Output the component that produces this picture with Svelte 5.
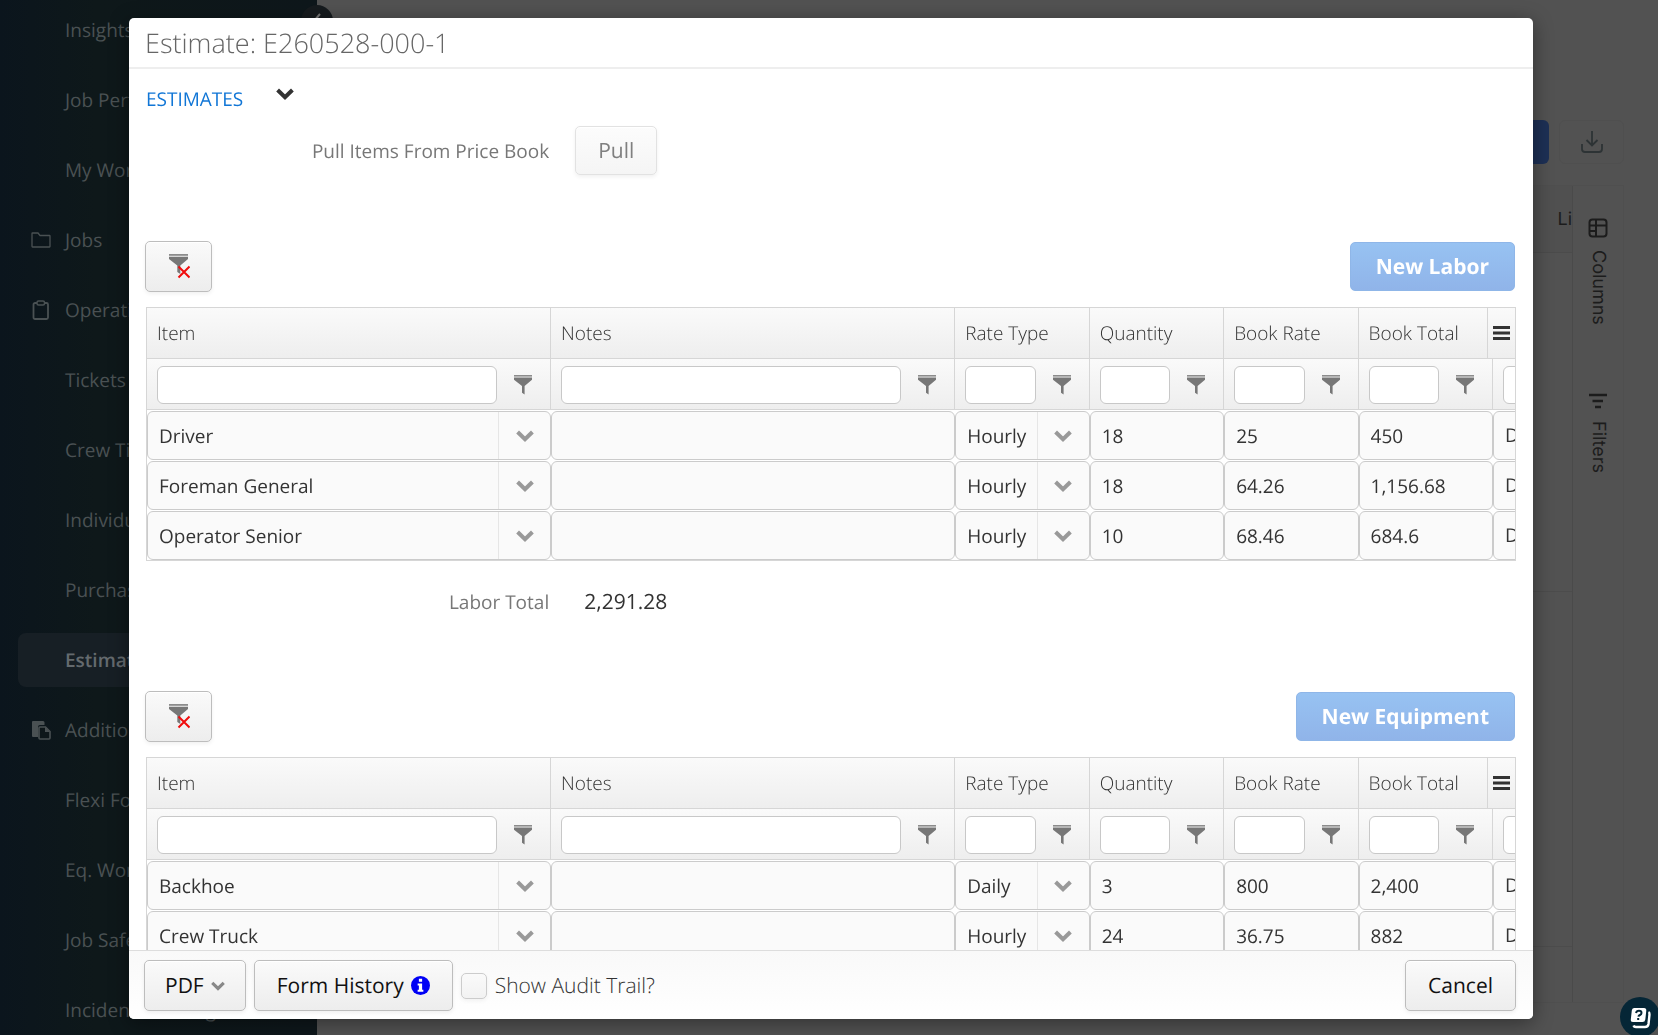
<script>
  const nav = [
    { label: 'Insights' },
    { label: 'Job Perf.' },
    { label: 'My Work' },
    { label: 'Jobs', icon: 'folder' },
    { label: 'Operations', icon: 'clipboard' },
    { label: 'Tickets' },
    { label: 'Crew Timesheets' },
    { label: 'Individual Time' },
    { label: 'Purchase Orders' },
    { label: 'Estimates', active: true },
    { label: 'Additional', icon: 'paste' },
    { label: 'Flexi Forms' },
    { label: 'Eq. Work Orders' },
    { label: 'Job Safety' },
    { label: 'Incident Tracking' }
  ];

  const columns = ['Item', 'Notes', 'Rate Type', 'Quantity', 'Book Rate', 'Book Total'];

  const sections = [
    {
      id: 'labor',
      action: 'New Labor',
      rows: [
        { item: 'Driver', type: 'Hourly', qty: '18', rate: '25', total: '450' },
        { item: 'Foreman General', type: 'Hourly', qty: '18', rate: '64.26', total: '1,156.68' },
        { item: 'Operator Senior', type: 'Hourly', qty: '10', rate: '68.46', total: '684.6' }
      ],
      totalLabel: 'Labor Total',
      total: '2,291.28'
    },
    {
      id: 'equipment',
      action: 'New Equipment',
      rows: [
        { item: 'Backhoe', type: 'Daily', qty: '3', rate: '800', total: '2,400' },
        { item: 'Crew Truck', type: 'Hourly', qty: '24', rate: '36.75', total: '882' }
      ]
    }
  ];

  let audit = $state(false);
</script>

{#snippet funnel()}
  <svg class="funnel" viewBox="0 0 18 20" width="18" height="20" aria-hidden="true">
    <path d="M0 0h18v1.6H0z" fill="#8c8c8c" />
    <path d="M0 2.6h18v2.2L10.6 11v8.6L8 17.8V11L0 4.8z" fill="#777" />
  </svg>
{/snippet}

{#snippet chevron()}
  <svg viewBox="0 0 18 12" width="18" height="12" aria-hidden="true">
    <path d="M1.6 2 9 9.2 16.4 2" fill="none" stroke="currentColor" stroke-width="4" />
  </svg>
{/snippet}

{#snippet combo(value, label)}
  <div class="combo box">
    <select aria-label={label}><option>{value}</option></select>
    <span class="arrow">{@render chevron()}</span>
  </div>
{/snippet}

<div class="page">
  <nav class="sidebar">
    <ul>
      {#each nav as n}
        <li>
          <a href="#nav" class:active={n.active}>
            <span class="navicon">
              {#if n.icon === 'folder'}
                <svg viewBox="0 0 20 16" width="20" height="16"><path d="M1 14.5V1.5Q1 1 1.5 1H7l2 2.5h9.500q.5 0 .5.5v10.500q0 .5-.5.5h-17q-.5 0-.5-.5z" fill="none" stroke="currentColor" stroke-width="1.300" /></svg>
              {:else if n.icon === 'clipboard'}
                <svg viewBox="-1 0 20 20" width="20" height="20"><rect x="1.500" y="3" width="14.500" height="16" rx="1.500" fill="none" stroke="currentColor" stroke-width="1.800" /><rect x="5" y="1" width="7.500" height="4" rx="1.500" fill="#0e171a" stroke="currentColor" stroke-width="1.500" /></svg>
              {:else if n.icon === 'paste'}
                <svg viewBox="0 0 20 20" width="20" height="20"><path d="M1 2q0-1 1-1h10q1.500 0 1.500 1.500V5H9Q7 5 7 7v10H2q-1 0-1-1z" fill="currentColor" /><path d="M9 7h5.500L19 11.500V18q0 1-1 1H9q-1 0-1-1V8q0-1 1-1z" fill="#0e171a" stroke="currentColor" stroke-width="1.600" /><path d="M14 7v5h5z" fill="currentColor" /></svg>
              {/if}
            </span>
            {n.label}
          </a>
        </li>
      {/each}
    </ul>
    <button class="collapse" aria-label="Collapse menu">
      <svg viewBox="0 0 12 16" width="12" height="16"><path d="M9 1 3 8l6 7" fill="none" stroke="currentColor" stroke-width="2" /></svg>
    </button>
  </nav>

  <main class="main">
    <div class="tools">
      <button class="create" aria-label="New estimate"></button>
      <button class="download" aria-label="Download">
        <svg viewBox="0 0 24 24" width="24" height="24" fill="none" stroke="currentColor" stroke-width="1.800"><path d="M12 1v14M6.500 10l5.500 5.500 5.500-5.500M2 14v5q0 3 3 3h14q3 0 3-3v-5" /></svg>
      </button>
    </div>
    <div class="listing">
      <div class="list">
        <div class="listhead">Li</div>
        <div class="listrows"></div>
        <div class="listfoot"></div>
      </div>
      <div class="tabs">
        <button>
          <svg viewBox="0 0 20 20" width="20" height="20" fill="none" stroke="currentColor" stroke-width="2"><rect x="1.500" y="1.500" width="17" height="17" rx="3" /><path d="M1.500 7.500h17M8 1.500v17M1.500 13H8" /></svg>
          <span>Columns</span>
        </button>
        <button>
          <svg viewBox="0 0 20 16" width="20" height="16" stroke="currentColor" stroke-width="2.400"><path d="M1 2h18M4.500 8H15M7 14h6" /></svg>
          <span>Filters</span>
        </button>
      </div>
    </div>
  </main>
</div>

<div class="overlay">
  <div class="modal" role="dialog" aria-labelledby="title">
    <header><h1 id="title">Estimate: E260528-000-1</h1></header>

    <div class="body">
      <div class="group">
        <a href="#estimates">ESTIMATES</a>
        <button class="toggle" aria-label="Collapse estimates">{@render chevron()}</button>
      </div>
      <div class="field pullrow">
        <label for="pull">Pull Items From Price Book</label>
        <button id="pull" class="btn faded">Pull</button>
      </div>

      {#each sections as s}
        <section>
          <div class="bar">
            <button class="btn clear" aria-label="Clear filters">
              <svg viewBox="-1 0 22 26" width="22" height="26" aria-hidden="true">
                <path d="M0 0h19v1.800H0z" fill="#8c8c8c" />
                <path d="M0 2.800h19V5l-7.700 6.500V20l-3-2v-6.500L0 5z" fill="#777" />
                <path d="m9.500 12.500 11 11m0-11-11 11" stroke="#f00d0d" stroke-width="2" />
              </svg>
            </button>
            <button class="primary">{s.action}</button>
          </div>

          <div class="grid">
            <table>
              <colgroup>
                <col class="wide" /><col class="wide" /><col class="slim" /><col class="slim" /><col class="slim" /><col class="slim" /><col />
              </colgroup>
              <thead>
                <tr class="names">
                  {#each columns as c}<th scope="col">{c}</th>{/each}
                  <th></th>
                </tr>
                <tr class="filters">
                  {#each columns as c}
                    <td>
                      <div class="filter">
                        <input type="text" aria-label={`Filter ${c}`} />
                        <button aria-label={`${c} filter options`}>{@render funnel()}</button>
                      </div>
                    </td>
                  {/each}
                  <td><div class="filter"><input type="text" aria-label="Filter" /></div></td>
                </tr>
              </thead>
              <tbody>
                {#each s.rows as r}
                  <tr>
                    <td>{@render combo(r.item, 'Item')}</td>
                    <td><input class="box" type="text" aria-label="Notes" /></td>
                    <td>{@render combo(r.type, 'Rate Type')}</td>
                    <td><input class="box" type="text" aria-label="Quantity" value={r.qty} /></td>
                    <td><input class="box" type="text" aria-label="Book Rate" value={r.rate} /></td>
                    <td><input class="box" type="text" aria-label="Book Total" value={r.total} /></td>
                    <td><div class="box cut">D</div></td>
                  </tr>
                {/each}
              </tbody>
            </table>
            <button class="menu" aria-label="Choose columns">
              <svg viewBox="0 0 17 14" width="17" height="14"><path d="M0 1.500h17M0 7h17M0 12.500h17" stroke="#333" stroke-width="2.800" /></svg>
            </button>
          </div>

          {#if s.total}
            <div class="field totalrow">
              <span class="name">{s.totalLabel}</span>
              <output>{s.total}</output>
            </div>
          {/if}
        </section>
      {/each}
    </div>

    <footer>
      <button class="btn pdf">PDF <svg viewBox="0 0 18 12" width="14" height="10" aria-hidden="true"><path d="M1.600 2 9 9.200 16.400 2" fill="none" stroke="#888" stroke-width="4" /></svg></button>
      <button class="btn">Form History
        <svg viewBox="0 0 20 20" width="19" height="19" aria-hidden="true"><circle cx="10" cy="10" r="10" fill="#0000f5" /><path d="M8.300 3h3.400v3H8.300zM7 8h4.700v6.500H13V16.500H7v-2h1.300V10H7z" fill="#fff" /></svg>
      </button>
      <label class="check"><input type="checkbox" bind:checked={audit} /> Show Audit Trail?</label>
      <button class="btn cancel">Cancel</button>
    </footer>
  </div>
</div>

<button class="help" aria-label="Help">
  <svg viewBox="0 0 24 24" width="24" height="24" aria-hidden="true">
    <path d="M6 3h10q2.500 0 2.300 2.500l-1 9q-.3 2.500-2.800 2.500H5q-2.500 0-2.200-2.500l1-9Q4 3 6 3z" fill="#fff" />
    <path d="M20.500 7q1.200.6 1 2.500l-1 9.500q-.4 3-3.500 3H8q-2 0-2.500-1.500" fill="none" stroke="#fff" stroke-width="2.400" />
    <path d="M8 8q.5-2.200 3-2.200T13.500 8q0 1.300-1.500 2t-1.600 1.700M10.200 13v2" fill="none" stroke="#052636" stroke-width="2" />
  </svg>
</button>

<style>
  :global(body) {
    margin: 0;
    overflow: hidden;
    font-family: 'Open Sans', 'Noto Sans', sans-serif;
    font-size: 18px;
    color: #333;
    text-rendering: geometricPrecision;
  }
  * { box-sizing: border-box; }
  button, input, select {
    font: inherit;
    color: inherit;
    margin: 0;
    text-rendering: inherit;
  }
  button {
    padding: 0;
    border: 0;
    background: none;
  }
  svg { display: block; flex: none; }

  .page {
    display: flex;
    height: 100vh;
    background: #525252;
  }
  .sidebar {
    position: relative;
    flex: 0 0 317px;
    background: linear-gradient(90deg, #0b151d, #0e181a 30%, #0e171b);
    padding: 3px 18px 0;
  }
  .sidebar ul {
    display: grid;
    gap: 16px;
    margin: 0;
    padding: 0;
    list-style: none;
  }
  .sidebar a {
    display: flex;
    align-items: center;
    height: 54px;
    padding-left: 13px;
    border-radius: 8px;
    color: #4a5153;
    font-size: 19px;
    text-decoration: none;
    white-space: nowrap;
  }
  .sidebar a.active {
    background: #171f25;
    color: #646a6e;
    font-weight: 600;
  }
  .navicon { width: 34px; }
  .collapse {
    position: absolute;
    top: 5px;
    right: -16px;
    display: grid;
    place-items: center;
    width: 32px;
    height: 32px;
    border-radius: 50%;
    background: #161b1e;
    color: #777;
  }

  .main {
    flex: 1;
    display: flex;
    flex-direction: column;
    gap: 21px;
    min-width: 0;
    padding: 120px 34px 32px 34px;
    font-family: Inter, sans-serif;
  }
  .tools {
    display: flex;
    justify-content: flex-end;
    gap: 10px;
  }
  .create {
    width: 160px;
    height: 44px;
    border-radius: 6px;
    background: #1d3055;
  }
  .download {
    display: grid;
    place-items: center;
    width: 65px;
    height: 44px;
    border: 1px solid #4f4f4f;
    border-radius: 6px;
    color: #2d3335;
  }
  .listing {
    flex: 1;
    display: flex;
    border: 1px solid #4f4f4f;
  }
  .list {
    flex: 1;
    display: flex;
    flex-direction: column;
    border-right: 1px solid #4a4a4a;
    color: #1c1c1c;
  }
  .listhead {
    height: 67px;
    line-height: 68px;
    text-align: right;
    background: #505050;
    border-bottom: 1px solid #4b4b4b;
  }
  .listrows {
    height: 339px;
    border-bottom: 1px solid #4c4c4c;
  }
  .listfoot {
    flex: 1;
    margin-bottom: 55px;
    border-bottom: 1px solid #4c4c4c;
  }
  .tabs {
    display: flex;
    flex-direction: column;
    gap: 68px;
    width: 50px;
    padding-top: 32px;
    color: #1c1c1c;
  }
  .tabs button {
    display: grid;
    justify-items: center;
    gap: 12px;
  }
  .tabs span {
    writing-mode: vertical-rl;
    line-height: 20px;
  }

  .overlay {
    position: fixed;
    inset: 0;
    display: flex;
    padding: 18px 125px 16px 129px;
  }
  .modal {
    flex: 1;
    display: flex;
    flex-direction: column;
    min-width: 0;
    overflow: hidden;
    border-radius: 5px;
    background: #fff;
    box-shadow: 0 4px 20px rgba(0, 0, 0, 0.4);
  }
  header {
    flex: none;
    padding: 0 16px;
    border-bottom: 2px solid #eee;
  }
  h1 {
    margin: 0;
    font-size: 27px;
    line-height: 49px;
    font-weight: 300;
    color: #666;
  }
  .body {
    flex: 1;
    min-height: 0;
    overflow: hidden;
    padding: 0 17px;
  }
  .group {
    display: flex;
    gap: 33px;
    padding: 16px 0 13px;
    line-height: 28px;
  }
  .group a {
    color: #1176d6;
    font-size: 19px;
    text-decoration: none;
  }
  .toggle {
    align-self: flex-start;
    padding-top: 3px;
    color: #333;
  }
  .field {
    display: grid;
    grid-template-columns: minmax(0, 30fr) minmax(0, 70fr);
    column-gap: 26px;
    align-items: center;
    color: #777;
    font-size: 19px;
  }
  .field label, .name { text-align: right; }
  .pullrow { margin-bottom: 66px; }
  .totalrow {
    height: 52px;
    margin: 15px 0 63px;
  }
  output {
    padding-left: 9px;
    color: #333;
    font-size: 21px;
  }
  .btn {
    display: inline-flex;
    align-items: center;
    justify-content: center;
    gap: 7px;
    height: 51px;
    padding: 0 22px;
    border: 1px solid #bdbdbd;
    border-radius: 5px;
    background: linear-gradient(#fafafa, #ededed);
    box-shadow: inset 0 1px #fff, 0 2px 4px rgba(0, 0, 0, 0.06);
    color: #111;
    font-size: 21px;
    white-space: nowrap;
  }
  .pdf { padding: 0 20px; }
  .faded {
    justify-self: start;
    height: 49px;
    border-color: #e2e2e2;
    background: linear-gradient(#fcfcfc, #f5f5f5);
    color: #808080;
  }
  .bar {
    display: flex;
    align-items: center;
    justify-content: space-between;
    margin: 0 1px 15px -1px;
  }
  .clear { width: 67px; padding: 0; }
  .primary {
    height: 49px;
    padding: 0 25px;
    border: 1px solid #8fb6e8;
    border-radius: 5px;
    background: linear-gradient(#97c2f2, #90b4e9);
    color: #fff;
    font-size: 21px;
    font-weight: 700;
  }

  .grid {
    position: relative;
    overflow: hidden;
    border: 1px solid #d6d6d6;
    font-size: 19px;
  }
  table {
    width: 100%;
    table-layout: fixed;
    border-collapse: separate;
    border-spacing: 0;
  }
  .wide { width: 29.540%; }
  .slim { width: 9.830%; }
  th, td { padding: 0; overflow: hidden; }
  thead th, thead td {
    border-right: 1px solid #d6d6d6;
    border-bottom: 1px solid #d6d6d6;
    background: linear-gradient(#fafafa, #eee);
  }
  thead th:last-child, thead td:last-child { border-right: 0; }
  thead th {
    height: 51px;
    padding: 0 10px;
    color: #333;
    font-weight: 300;
    text-align: left;
  }
  thead td { height: 51px; padding-top: 1px; }
  .filter {
    display: flex;
    align-items: center;
    gap: 17px;
    padding: 0 18px 0 10px;
  }
  .filter input {
    flex: 1;
    min-width: 0;
    height: 38px;
    padding: 0 8px;
    border: 1px solid #c8c8c8;
    border-radius: 6px;
    background: #fff;
  }
  td:last-child .filter { width: 130px; }
  .menu {
    position: absolute;
    top: 0;
    right: 0;
    display: grid;
    place-items: center;
    width: 28px;
    height: 51px;
    border-left: 1px solid #d6d6d6;
    border-bottom: 1px solid #d6d6d6;
    background: linear-gradient(#fafafa, #eee);
  }
  tbody td { height: 50px; padding-top: 1px; }
  .box {
    display: block;
    width: 100%;
    height: 49px;
    padding: 0 11px;
    border: 1px solid #cbcbcb;
    border-radius: 6px;
    background: #fafafa;
    color: #333;
  }
  .cut { width: 130px; line-height: 47px; }
  .combo {
    display: grid;
    grid-template-columns: 1fr 52px;
    padding: 0;
  }
  .combo select {
    grid-area: 1 / 1 / 2 / 3;
    width: 100%;
    padding: 0 11px;
    border: 0;
    background: transparent;
    appearance: none;
  }
  .arrow {
    grid-area: 1 / 2 / 2 / 3;
    display: grid;
    place-items: center;
    border-left: 1px solid #e6e6e6;
    color: #999;
    pointer-events: none;
  }

  footer {
    flex: none;
    display: flex;
    align-items: center;
    gap: 8px;
    height: 69px;
    padding: 1px 17px 0 15px;
    border-top: 1px solid #ddd;
    background: linear-gradient(#f9f9f9, #fff);
  }
  .check {
    display: flex;
    align-items: center;
    gap: 8px;
    color: #333;
    font-size: 21px;
    font-weight: 300;
  }
  .check input {
    width: 26px;
    height: 26px;
    border: 1px solid #ccc;
    border-radius: 5px;
    background: linear-gradient(#fafafa, #f2f2f2);
    box-shadow: 0 2px 4px rgba(0, 0, 0, 0.05);
    appearance: none;
  }
  .check input:checked { background: #1176d6; }
  .cancel { margin-left: auto; }

  .help {
    position: fixed;
    right: -2px;
    bottom: -2px;
    display: grid;
    place-items: center;
    width: 40px;
    height: 40px;
    border-radius: 50%;
    background: #052636;
  }
</style>
